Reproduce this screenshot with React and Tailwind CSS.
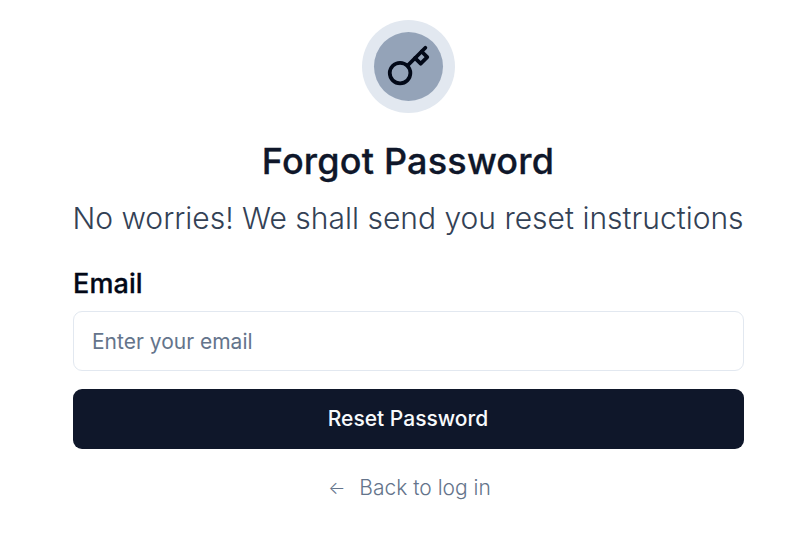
export default function App() {
  return (
    <main className="flex h-[546px] w-full flex-col items-center overflow-hidden bg-white pt-5 pr-[59px] pl-[73px] font-['Inter',sans-serif] text-[#020817]">
      <div className="flex size-[93px] shrink-0 items-center justify-center rounded-full bg-slate-200">
        <div className="flex size-[69px] items-center justify-center rounded-full bg-[#94a3b8]">
          <svg className="size-[45px]" viewBox="0 0 24 24" fill="none" stroke="currentColor" strokeWidth="2" strokeLinecap="round" strokeLinejoin="round">
            <circle cx="7.5" cy="15.5" r="5.5" />
            <path d="m21 2-9.6 9.6" />
            <path d="m15.5 7.5 3 3L22 7l-3-3" />
          </svg>
        </div>
      </div>
      <h1 className="mt-[25px] pr-px text-[36px] leading-[46px] font-medium tracking-[0.2px] whitespace-nowrap text-[#0f172a] [-webkit-text-stroke:0.3px_#0f172a]">Forgot Password</h1>
      <p className="mt-[12px] pr-px text-[30px] leading-[45px] font-light whitespace-nowrap text-[#334155]">No worries! We shall send you reset instructions</p>
      <form className="mt-[25px] flex w-full flex-col" onSubmit={(e) => e.preventDefault()}>
        <label htmlFor="email" className="text-[27px] leading-[36px] font-medium tracking-[0.1px] [-webkit-text-stroke:0.3px_#020817]">Email</label>
        <input id="email" type="email" placeholder="Enter your email" className="mt-[9px] h-[60px] w-full rounded-[9px] border border-[#e2e8f0] px-[18px] text-[21px] placeholder:text-[#64748b]" />
        <button className="mt-[18px] h-[60px] rounded-[9px] bg-[#0f172a] pr-px text-[21px] font-medium text-slate-50">Reset Password</button>
      </form>
      <a className="mt-[24px] flex items-center gap-[14px] pl-[2px] text-[21px] leading-[30px] font-light text-[#64748b]"><span className="text-[18px]">←</span><span>Back to log in</span></a>
    </main>
  );
}
